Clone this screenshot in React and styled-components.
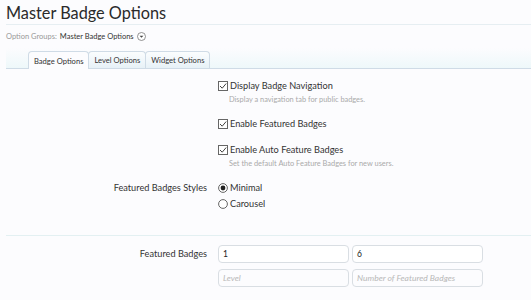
import React from "react";
import styled, { createGlobalStyle } from "styled-components";

const Global = createGlobalStyle`
  html, body { margin: 0; padding: 0; background: #fcfcfe; }
  body { font-family: Lato, "Open Sans", sans-serif; color: #333; }
`;

const Page = styled.div`
  width: 531px;
  height: 300px;
  overflow: hidden;
  padding-left: 6px;
  box-sizing: border-box;
`;

const Title = styled.h1`
  margin: 0;
  padding-top: 1px;
  height: 23px;
  font-size: 16.3px;
  font-weight: 400;
  line-height: 23px;
  color: #2a2a2a;
  border-bottom: 1px solid #e6eef2;
`;

const Groups = styled.div`
  display: flex;
  align-items: center;
  gap: 3px;
  height: 23px;
  font-size: 7.5px;
  color: #999;
  b { font-weight: 400; color: #333; }
`;

const TabBar = styled.div`
  display: flex;
  align-items: flex-end;
  height: 20px;
  padding-left: 22px;
  border-bottom: 1px solid #cfdbe6;
  background: linear-gradient(#fcfcfe, #eef8fa);
`;

const Tab = styled.div`
  height: ${(p) => (p.$active ? "17px" : "16px")};
  margin-bottom: ${(p) => (p.$active ? "-1px" : "0")};
  padding: 0 5px;
  display: flex;
  align-items: center;
  font-size: 7.6px;
  color: #333;
  border: 1px solid #cfdbe6;
  border-bottom: none;
  border-radius: 4px 4px 0 0;
  margin-right: -1px;
  background: ${(p) => (p.$active ? "#fcfcfe" : "linear-gradient(#fbfdfe, #e7f1f7)")};
`;

const Form = styled.div`
  display: grid;
  grid-template-columns: 201px 1fr;
  column-gap: 11px;
  padding-top: ${(p) => p.$pt || 0}px;
`;

const Label = styled.div`
  text-align: right;
  font-size: 9.2px;
  line-height: ${(p) => p.$lh || 14}px;
  color: #333;
`;

const Controls = styled.div`
  display: flex;
  flex-direction: column;
  padding-bottom: ${(p) => p.$pb || 0}px;
`;

const Check = styled.div`
  display: flex;
  align-items: center;
  gap: 2px;
  font-size: 9.2px;
  line-height: 14px;
  margin-top: ${(p) => p.$mt || 0}px;
`;

const Hint = styled.div`
  font-size: 7.4px;
  color: #aaa;
  padding-left: 11px;
  line-height: 12px;
  margin-top: 1px;
`;

const Divider = styled.div`
  height: 1px;
  background: #e3f0f2;
  margin: 0 0 9px 0;
`;

const Inputs = styled.div`
  display: grid;
  grid-template-columns: 131px 131px;
  gap: 3px;
  margin-bottom: 6px;
`;

const Input = styled.div`
  height: 18px;
  box-sizing: border-box;
  border: 1px solid #d9dee3;
  border-radius: 4px;
  padding: 0 4px;
  display: flex;
  align-items: center;
  font-size: 8.5px;
  color: ${(p) => (p.$ph ? "#b8b8b8" : "#222")};
  font-style: ${(p) => (p.$ph ? "italic" : "normal")};
  background: ${(p) => (p.$ph ? "#fcfcfe" : "#fff")};
`;

const CheckBox = () => (
  <svg width="10" height="10" viewBox="0 0 10 10">
    <rect x="0.5" y="0.5" width="9" height="9" fill="#fff" stroke="#666" />
    <path d="M2 5 L4.2 7.2 L8.2 2.5" fill="none" stroke="#444" strokeWidth="1" />
  </svg>
);

const Radio = ({ on }) => (
  <svg width="10" height="10" viewBox="0 0 10 10">
    <circle cx="5" cy="5" r="4.4" fill="#fff" stroke="#555" strokeWidth="0.9" />
    {on && <circle cx="5" cy="5" r="2.4" fill="#222" />}
  </svg>
);

const Caret = () => (
  <svg width="9" height="9" viewBox="0 0 9 9">
    <circle cx="4.5" cy="4.5" r="4" fill="#fff" stroke="#777" strokeWidth="0.8" />
    <path d="M2.6 3.7 L6.4 3.7 L4.5 5.8 Z" fill="#444" />
  </svg>
);

export default function App() {
  return (
    <>
      <Global />
      <Page>
        <Title>Master Badge Options</Title>
        <Groups>
          Option Groups: <b>Master Badge Options</b> <Caret />
        </Groups>
        <TabBar>
          <Tab $active>Badge Options</Tab>
          <Tab>Level Options</Tab>
          <Tab>Widget Options</Tab>
        </TabBar>
        <Form $pt={10}>
          <Label />
          <Controls $pb={11}>
            <Check>
              <CheckBox /> Display Badge Navigation
            </Check>
            <Hint>Display a navigation tab for public badges.</Hint>
            <Check $mt={11}>
              <CheckBox /> Enable Featured Badges
            </Check>
            <Check $mt={12}>
              <CheckBox /> Enable Auto Feature Badges
            </Check>
            <Hint>Set the default Auto Feature Badges for new users.</Hint>
          </Controls>
          <Label>Featured Badges Styles</Label>
          <Controls $pb={24}>
            <Check>
              <Radio on /> Minimal
            </Check>
            <Check $mt={2}>
              <Radio /> Carousel
            </Check>
          </Controls>
        </Form>
        <Divider />
        <Form>
          <Label $lh={18}>Featured Badges</Label>
          <Controls>
            <Inputs>
              <Input>1</Input>
              <Input>6</Input>
            </Inputs>
            <Inputs>
              <Input $ph>Level</Input>
              <Input $ph>Number of Featured Badges</Input>
            </Inputs>
          </Controls>
        </Form>
      </Page>
    </>
  );
}
